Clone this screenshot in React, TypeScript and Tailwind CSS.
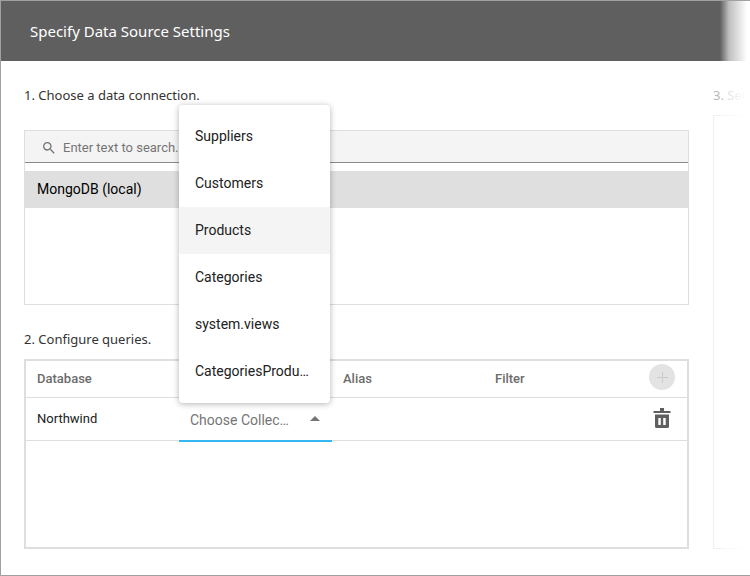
import { useState } from "react";

const collections = [
  "Suppliers",
  "Customers",
  "Products",
  "Categories",
  "system.views",
  "CategoriesProducts",
];

function SearchIcon() {
  return (
    <svg aria-hidden="true" viewBox="3 3 18 18" className="size-3 shrink-0 fill-[#757575]">
      <path d="M15.5 14h-.79l-.28-.27A6.471 6.471 0 0 0 16 9.5 6.5 6.5 0 1 0 9.5 16c1.61 0 3.09-.59 4.23-1.57l.27.28v.79l5 4.99L20.49 19l-4.99-5zm-6 0C7.01 14 5 11.99 5 9.5S7.01 5 9.5 5 14 7.01 14 9.5 11.99 14 9.5 14z" />
    </svg>
  );
}

function TrashIcon() {
  return (
    <svg aria-hidden="true" viewBox="0 0 18 20" className="h-5 w-[18px] fill-[#5f5f5f]">
      <path d="M7 0h4v3h6.500v2H.5V3H7z" />
      <path
        fillRule="evenodd"
        d="M2 6.500h14v12a1.500 1.500 0 0 1-1.500 1.500h-11A1.500 1.500 0 0 1 2 18.500zM5.300 10v7h2.500v-7zM10.200 10v7h2.500v-7z"
      />
    </svg>
  );
}

function CollectionPicker() {
  const [value, setValue] = useState("");
  return (
    <div className="relative h-11 border-b-2 border-[#35b8f1]">
      <select
        aria-label="Collection"
        value={value}
        onChange={(e) => setValue(e.target.value)}
        className="h-full w-full appearance-none truncate pt-0.5 pr-10 pl-[11px] text-sm text-[#757575] outline-none"
      >
        <option value="">Choose Collection...</option>
        {collections.map((name) => (
          <option key={name}>{name}</option>
        ))}
      </select>
      <svg
        aria-hidden="true"
        viewBox="0 0 10 5"
        className="pointer-events-none absolute top-[18px] right-3 h-[5px] w-2.5 fill-[#757575]"
      >
        <path d="M0 5 5 0l5 5z" />
      </svg>
      <ul
        role="listbox"
        aria-label="Collections"
        className="absolute right-0.5 bottom-[37px] left-0 z-10 rounded-sm bg-white py-2 shadow-[0_1px_6px_rgba(0,0,0,0.3)]"
      >
        {collections.map((name) => (
          <li
            key={name}
            role="option"
            aria-selected={name === value}
            className={
              name === "Products"
                ? "truncate bg-[#f4f4f4] px-4 text-sm leading-[47px] text-[#212121]"
                : "truncate px-4 text-sm leading-[47px] text-[#212121]"
            }
          >
            {name}
          </li>
        ))}
      </ul>
    </div>
  );
}

export default function App() {
  return (
    <div className="relative flex min-h-screen flex-col overflow-hidden border-y border-l border-[#a0a0a0] bg-white font-[Roboto,'Liberation_Sans',sans-serif]">
      <header className="flex h-[60px] shrink-0 items-center bg-[#5f5f5f] pl-[29px]">
        <h1 className="font-['Noto_Sans','Open_Sans',sans-serif] text-[15px] text-white">
          Specify Data Source Settings
        </h1>
      </header>
      <main className="flex grow gap-6 pb-[26px] pl-[23px]">
        <div className="flex min-w-0 grow flex-col">
          <section>
            <h2 className="flex h-[69px] items-center font-['Noto_Sans','Open_Sans',sans-serif] text-[13px] text-[#333]">
              1. Choose a data connection.
            </h2>
            <div className="h-[175px] border border-[#dedede]">
              <label className="flex h-8 items-center gap-2 border-b border-[#8a8a8a] bg-[#f4f4f4] pt-0.5 pl-[18px]">
                <SearchIcon />
                <input
                  type="text"
                  aria-label="Search connections"
                  placeholder="Enter text to search..."
                  className="min-w-0 grow bg-transparent text-[13px] outline-none placeholder:text-[#757575]"
                />
              </label>
              <ul className="pt-2">
                <li className="bg-[#dfdfdf] pl-3 text-sm leading-[37px] text-black">
                  MongoDB (local)
                </li>
              </ul>
            </div>
          </section>
          <section className="flex grow flex-col">
            <h2 className="flex h-[54px] items-center pt-4 font-['Noto_Sans','Open_Sans',sans-serif] text-[13px] text-[#333]">
              2. Configure queries.
            </h2>
            <div className="grow border-2 border-[#dedede]">
              <table className="w-full table-fixed border-separate border-spacing-0 text-left text-[13px]">
                <thead className="text-[#6c6c6c]">
                  <tr className="h-[37px]">
                    <th className="w-[153px] border-b border-[#dedede] pl-[11px] font-medium">Database</th>
                    <th aria-label="Collection" className="w-[153px] border-b border-[#dedede]" />
                    <th className="w-[153px] border-b border-[#dedede] pl-[11px] font-medium">Alias</th>
                    <th className="border-b border-[#dedede] pl-2.5 font-medium">Filter</th>
                    <th className="w-[50px] border-b border-[#dedede]">
                      <button
                        type="button"
                        aria-label="Add query"
                        disabled
                        className="mx-auto mb-1 flex size-[26px] items-center justify-center rounded-full bg-[#e3e3e3]"
                      >
                        <svg aria-hidden="true" viewBox="0 0 11 11" className="size-[11px] fill-[#cbcbcb]">
                          <path d="M5 0h1v5h5v1H6v5H5V6H0V5h5z" />
                        </svg>
                      </button>
                    </th>
                  </tr>
                </thead>
                <tbody className="text-[#212121]">
                  <tr className="h-[43px]">
                    <td className="border-b border-[#dedede] pl-[11px]">Northwind</td>
                    <td className="border-b border-[#dedede] align-top">
                      <div className="h-[42px]">
                        <CollectionPicker />
                      </div>
                    </td>
                    <td className="border-b border-[#dedede]" />
                    <td className="border-b border-[#dedede]" />
                    <td className="border-b border-[#dedede]">
                      <button type="button" aria-label="Delete query" className="mx-auto mb-0.5 block">
                        <TrashIcon />
                      </button>
                    </td>
                  </tr>
                </tbody>
              </table>
            </div>
          </section>
        </div>
        <section className="flex w-[37px] shrink-0 flex-col overflow-hidden">
          <h2 className="flex h-[54px] items-center pt-4 font-['Noto_Sans','Open_Sans',sans-serif] text-[13px] whitespace-nowrap text-[#b8b8b8]">
            3. Set
          </h2>
          <div className="grow border-y border-l border-[#f0f0f0]" />
        </section>
      </main>
      <div
        aria-hidden="true"
        className="pointer-events-none absolute -inset-y-px right-0 w-[30px] bg-linear-to-r from-transparent via-white/60 via-30% to-white to-90%"
      />
    </div>
  );
}
